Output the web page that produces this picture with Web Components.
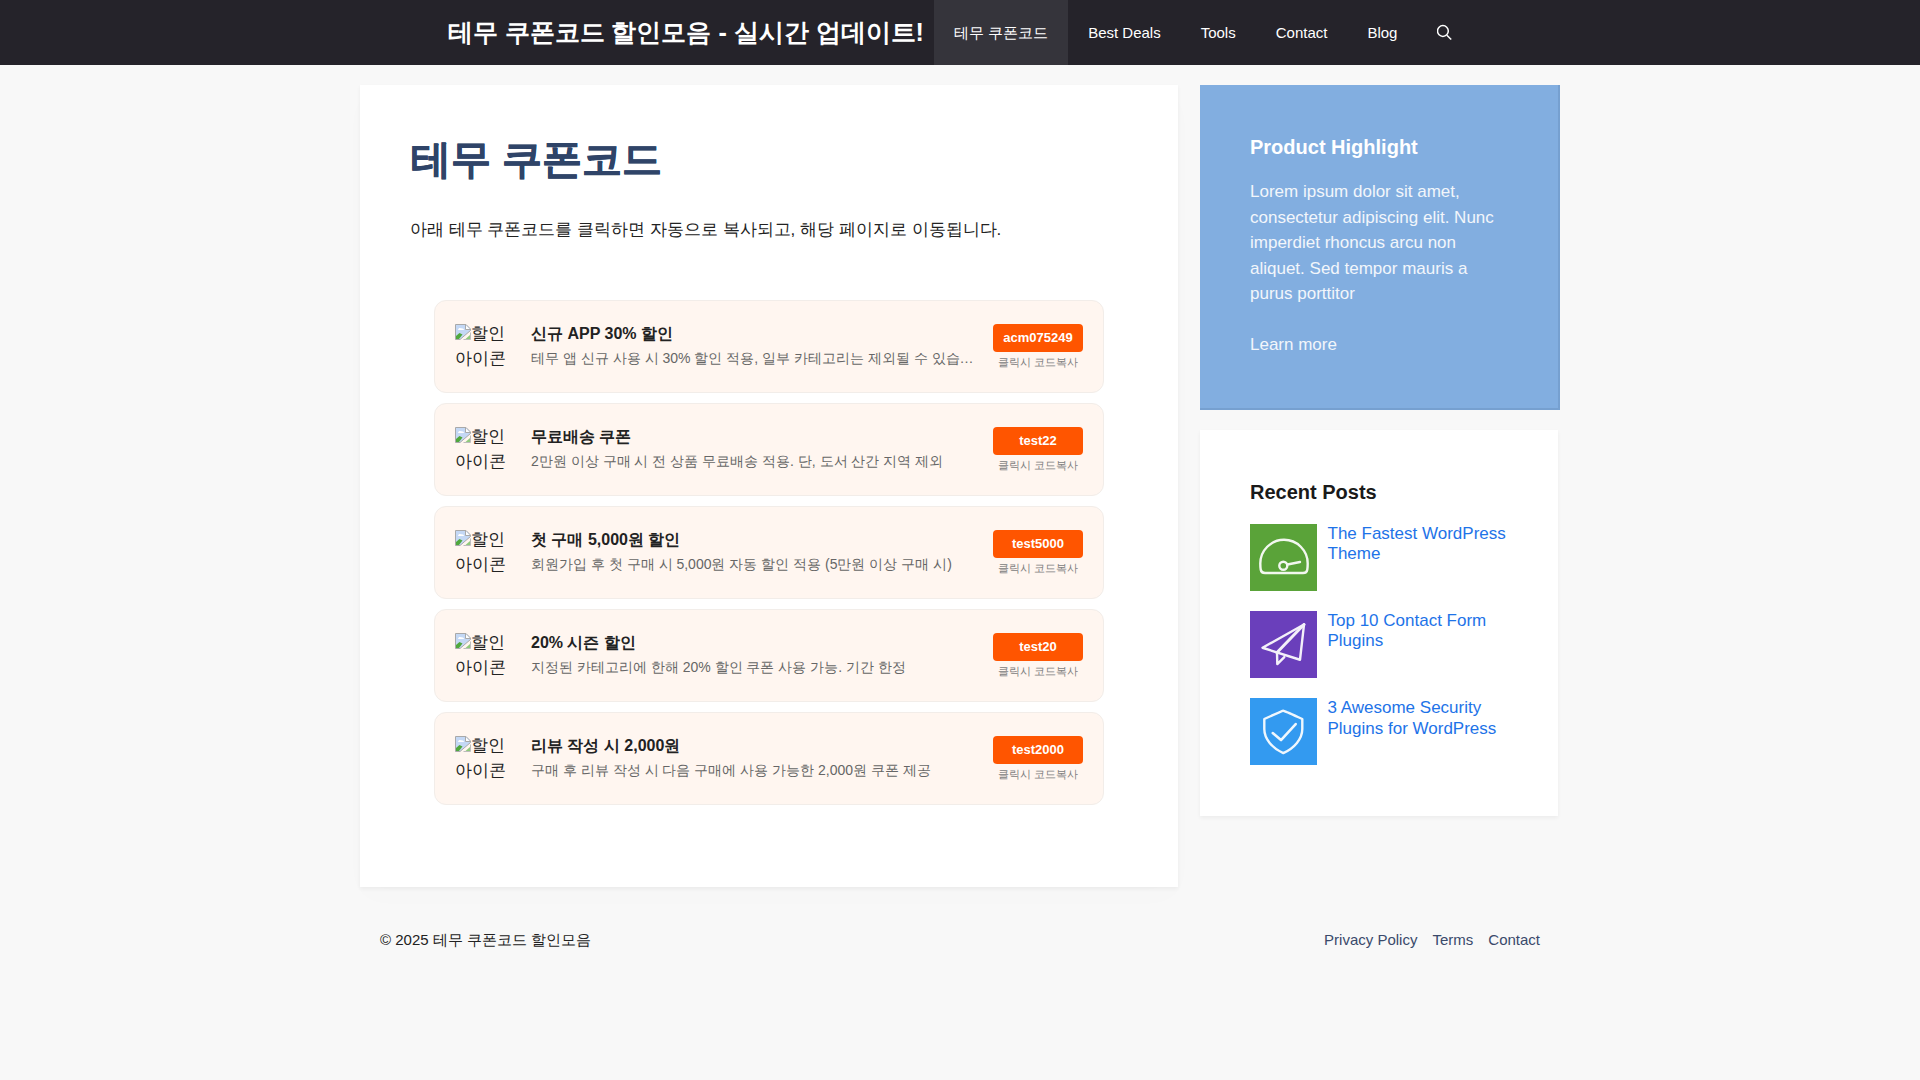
<!DOCTYPE html>
<html lang="ko"><head><meta charset="utf-8"><title>테무 쿠폰코드</title>
<style>
html,body{margin:0;padding:0;background:#f8f8f8;}
body{font-family:"Liberation Sans",sans-serif;font-size:17px;line-height:1.5;color:#222;min-height:1080px;}
</style></head><body>
<site-header></site-header>
<page-layout>
  <main-card slot="main">
    <coupon-card heading="신규 APP 30% 할인" desc="테무 앱 신규 사용 시 30% 할인 적용, 일부 카테고리는 제외될 수 있습니다." code="acm075249"></coupon-card>
    <coupon-card heading="무료배송 쿠폰" desc="2만원 이상 구매 시 전 상품 무료배송 적용. 단, 도서 산간 지역 제외" code="test22"></coupon-card>
    <coupon-card heading="첫 구매 5,000원 할인" desc="회원가입 후 첫 구매 시 5,000원 자동 할인 적용 (5만원 이상 구매 시)" code="test5000"></coupon-card>
    <coupon-card heading="20% 시즌 할인" desc="지정된 카테고리에 한해 20% 할인 쿠폰 사용 가능. 기간 한정" code="test20"></coupon-card>
    <coupon-card heading="리뷰 작성 시 2,000원" desc="구매 후 리뷰 작성 시 다음 구매에 사용 가능한 2,000원 쿠폰 제공" code="test2000"></coupon-card>
  </main-card>
  <highlight-widget slot="side"></highlight-widget>
  <recent-widget slot="side">
    <post-item label="The Fastest WordPress Theme" kind="gauge"></post-item>
    <post-item label="Top 10 Contact Form Plugins" kind="plane"></post-item>
    <post-item label="3 Awesome Security Plugins for WordPress" kind="shield"></post-item>
  </recent-widget>
</page-layout>
<site-footer></site-footer>
<script>
function def(name, html){
  customElements.define(name, class extends HTMLElement{
    connectedCallback(){
      if(this.shadowRoot) return;
      const r=this.attachShadow({mode:'open'});
      const a=n=>this.getAttribute(n)||'';
      r.innerHTML = typeof html==='function'?html(a):html;
    }
  });
}
def('site-header',`<style>
:host{display:flex;justify-content:center;background:#25232a;height:65px;color:#fff}
.t{font-size:25px;font-weight:700;line-height:65px;margin-right:10px;white-space:nowrap}
a{display:block;padding:0 20px;font-size:15px;line-height:65px;color:#fff;white-space:nowrap}
a.on{background:#35343b}
svg{display:block;height:65px;width:15px}
</style><div class="t">테무 쿠폰코드 할인모음 - 실시간 업데이트!</div>
<a class="on">테무 쿠폰코드</a><a>Best Deals</a><a>Tools</a><a>Contact</a><a>Blog</a>
<a><svg viewBox="0 0 15 65" fill="none" stroke="#fff" stroke-width="1.5"><circle cx="5.900" cy="31" r="5.400"/><path d="M9.900 35.200l4.300 4.300"/></svg></a>`);
def('page-layout',`<style>
:host{display:flex;width:1200px;margin:20px auto 0;gap:22px;align-items:flex-start}
.m{width:818px;flex:none}.s{width:360px;flex:none;display:flex;flex-direction:column;gap:20px}
</style><div class="m"><slot name="main"></slot></div><div class="s"><slot name="side"></slot></div>`);
def('main-card',`<style>
:host{display:block;background:#fff;padding:50px 50px 82px;box-shadow:0 2px 4px rgba(0,0,0,.05),0 10px 30px rgba(0,0,0,.012)}
h1{margin:0 0 32.500px;font-size:40.300px;line-height:48px;font-weight:700;color:#2f4468;-webkit-text-stroke:.5px #2f4468;padding:1px 0 0 .5px}
p{margin:0 0 58px}
.l{display:flex;flex-direction:column;gap:10.5px;padding:0 24px}
</style><h1>테무 쿠폰코드</h1><p>아래 테무 쿠폰코드를 클릭하면 자동으로 복사되고, 해당 페이지로 이동됩니다.</p><div class="l"><slot></slot></div>`);
def('coupon-card',a=>`<style>
:host{display:flex;align-items:center;box-sizing:border-box;height:92.500px;padding:0 20px;background:#fff6f0;border:1px solid #f2ede9;border-radius:12px}
.i{width:60px;flex:none;margin-right:16px;line-height:25.5px;font-size:17px;color:#222}
.i svg{width:16px;height:16px;vertical-align:-1px}
.c{flex:1;min-width:0;margin-bottom:1.500px}
.h{font-size:16px;font-weight:700;line-height:24px;color:#222}
.d{font-size:14px;line-height:21px;color:#666;white-space:nowrap;overflow:hidden;text-overflow:ellipsis;margin-top:1.500px}
.r{flex:none;width:90px;margin:1px 0 0 18px;text-align:center}
.b{height:28px;line-height:28px;background:#f50;color:#fff;font-size:13px;font-weight:700;border-radius:4px}
.k{font-size:11px;line-height:16px;color:#808080;margin-top:2px}
</style><div class="i"><svg viewBox="0 0 16 16"><path d="M.5 15.500V.500H11L15.500 5v1.500L5 15.500z" fill="#c4d8f5" stroke="#a9a9a9"/><path d="M10.500 1v4.500H15" fill="#fff" stroke="#a9a9a9"/><path d="M3 6c.5-2 2-2.500 3-1.500 1.500-.5 3 .5 3 1.500z" fill="#fff"/><path d="M1 15v-3l3.500-3 3 1.500L4 15z" fill="#4fa83d"/><path d="M15.500 8.500v7H8.500" fill="none" stroke="#bdbdbd"/><path d="M10.500 15l4.500-4v4z" fill="#8fc97c"/></svg>할인 아이콘</div>
<div class="c"><div class="h">${a('heading')}</div><div class="d">${a('desc')}</div></div>
<div class="r"><div class="b">${a('code')}</div><div class="k">클릭시 코드복사</div></div>`);
def('highlight-widget',`<style>
:host{display:block;box-sizing:border-box;height:325px;padding:50px;background:#82aee0;border-right:2px solid #76a0d0;border-bottom:2px solid #76a0d0;color:#fff}
h2{margin:0 0 20px;font-size:20px;line-height:24px;font-weight:700}
</style><h2>Product Highlight</h2><div style="color:#f2f6fb">Lorem ipsum dolor sit amet, consectetur adipiscing elit. Nunc imperdiet rhoncus arcu non aliquet. Sed tempor mauris a purus porttitor<br><br>Learn more</div>`);
def('recent-widget',`<style>
:host{display:flex;flex-direction:column;gap:20px;width:358px;box-sizing:border-box;padding:50px 50px 50.700px;background:#fff;box-shadow:0 2px 4px rgba(0,0,0,.05)}
h2{margin:0;font-size:20px;line-height:24px;font-weight:700;color:#1a1a1a}
</style><h2>Recent Posts</h2><slot></slot>`);
const icons={
gauge:'<path d="M15 49h38c2.500 0 4-1.200 4.300-3.500.3-2 .4-4 .4-6a23.700 23.700 0 0 0-47.400 0c0 2 .1 4 .4 6 .3 2.300 1.800 3.500 4.300 3.500z"/><circle cx="33.300" cy="41.700" r="4"/><path d="M37.500 40.500L50 38"/>',
plane:'<path d="M54 13.500L12.500 36.700 50 48.700z"/><path d="M54 13.500L27 41.500" stroke-width="3"/><path d="M27 41.500l.3 11.500 7-7"/>',
shield:'<path d="M33.300 12.700c1 0 2 .5 19 8.300v10c0 10-8 19-19 24-11-5-19-14-19-24V21c17-7.800 18-8.300 19-8.300z"/><path d="M22.700 35l8.300 7 14.700-16" stroke-width="2.600"/>'};
const bg={gauge:'#5aa339',plane:'#6a3fbb',shield:'#339af0'};
def('post-item',a=>`<style>
:host{display:flex;gap:10.500px}
svg{display:block;width:67px;height:67.090px;flex:none}
a{font-size:17px;line-height:20.400px;color:#1e73e8;display:block}
</style><svg viewBox="0 0 67 67" preserveAspectRatio="none"><rect width="67" height="67" fill="${bg[a('kind')]}"/><g fill="none" stroke="#fff" stroke-width="2.400" stroke-linejoin="round" stroke-linecap="round" opacity=".92">${icons[a('kind')]}</g></svg><a>${a('label')}</a>`);
def('site-footer',`<style>
:host{display:flex;justify-content:space-between;width:1200px;box-sizing:border-box;margin:0 auto;padding:41px 20px 40px;font-size:15px;line-height:24px;color:#222}
a{color:#3a4a6b;margin-left:15px}
</style><div>© 2025 테무 쿠폰코드 할인모음</div><div><a>Privacy Policy</a><a>Terms</a><a>Contact</a></div>`);
</script></body></html>
